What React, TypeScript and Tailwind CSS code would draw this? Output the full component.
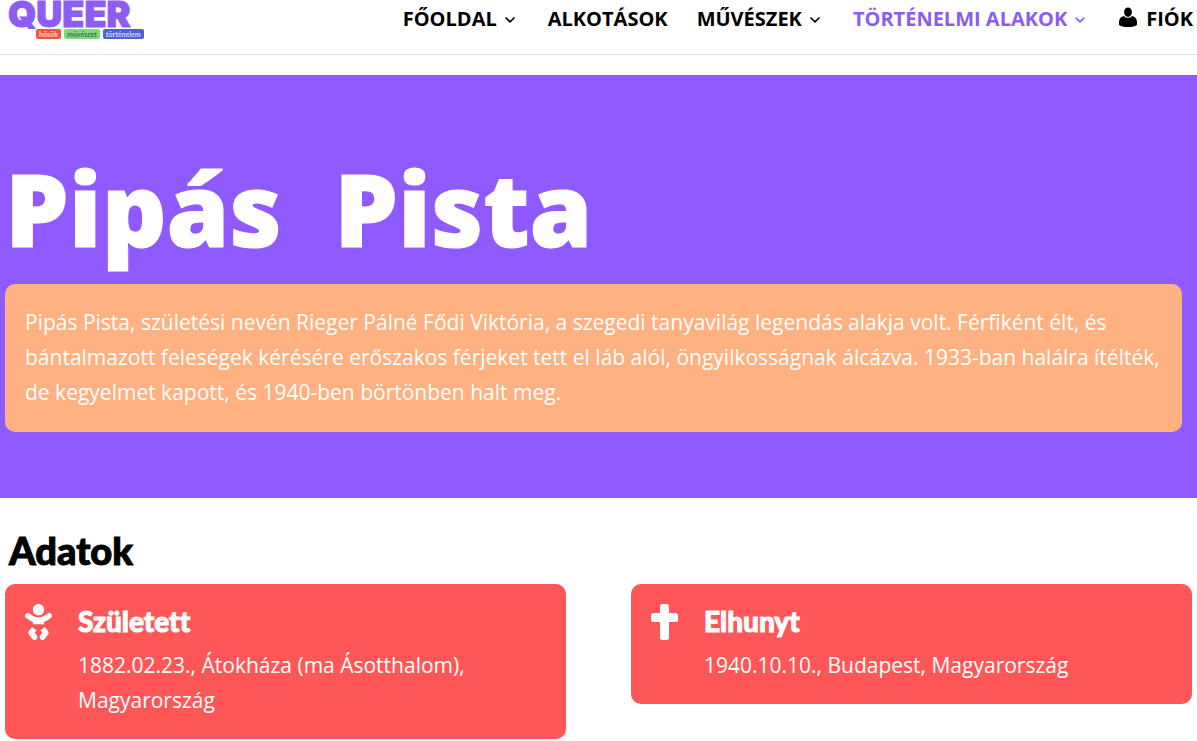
import type { ReactNode } from 'react';
import clsx from 'clsx';
import { FaBaby, FaCross } from 'react-icons/fa';

interface NavItem {
  label: string;
  hasMenu?: boolean;
  active?: boolean;
  icon?: ReactNode;
}

function UserIcon() {
  return (
    <svg viewBox="0 0 20 20" className="mb-1 h-5 w-5" fill="currentColor" aria-hidden="true">
      <path d="M10 9.800c-2.300 0-3.900-2.400-3.900-4.900C6.100 2.300 7.700.5 10 .5s3.900 1.800 3.900 4.400c0 2.500-1.600 4.900-3.900 4.900zM14.200 8.900c2.700.6 4.800 2.900 4.800 5.900v2.700c0 .5-.3.800-.7 1C15.900 19.600 13 20 10 20s-5.900-.4-8.300-1.500c-.4-.2-.7-.5-.7-1v-2.700c0-3 2.100-5.300 4.800-5.900 1.100 1.200 2.500 1.900 4.200 1.900s3.100-.7 4.200-1.900z" />
    </svg>
  );
}

function ChevronIcon() {
  return (
    <svg viewBox="0 0 10 6" className="mr-1 mt-0.5 h-[6px] w-[10px]" fill="none" stroke="currentColor" strokeWidth="1.7" strokeLinecap="round" strokeLinejoin="round" aria-hidden="true">
      <path d="M1 1l4 3.800L9 1" />
    </svg>
  );
}

const navItems: NavItem[] = [
  { label: 'FŐOLDAL', hasMenu: true },
  { label: 'ALKOTÁSOK' },
  { label: 'MŰVÉSZEK', hasMenu: true },
  { label: 'TÖRTÉNELMI ALAKOK', hasMenu: true, active: true },
  { label: 'FIÓK', icon: <UserIcon /> },
];

const facts = [
  { title: 'Született', text: '1882.02.23., Átokháza (ma Ásotthalom), Magyarország', icon: FaBaby },
  { title: 'Elhunyt', text: '1940.10.10., Budapest, Magyarország', icon: FaCross },
];

function Logo() {
  return (
    <a href="#" className="flex flex-col pl-2">
      <span className="font-['Inter',sans-serif] text-[36px] leading-[29px] font-black text-[#8c5cf5] [-webkit-text-stroke:1px]">QUEER</span>
      <span className="ml-7 flex gap-[3px] font-['Lato',sans-serif] text-[7px] leading-[10px] font-black text-white/70">
        <span className="rounded-xs bg-[#f0563f] px-[3px]">hősök</span>
        <span className="rounded-xs bg-[#7fd67c] px-[3px] text-[#3f7d58]">művészet</span>
        <span className="rounded-xs bg-[#4f62d0] px-[3px]">történelem</span>
      </span>
    </a>
  );
}

export default function App() {
  return (
    <div className="bg-white font-['Open_Sans',sans-serif] text-black">
      <header className="flex h-[55px] items-start justify-between border-b border-[#e2e2e2] pr-1">
        <Logo />
        <nav className="flex items-center gap-[29px] pt-1 text-xl leading-[30px] font-bold">
          {navItems.map((item) => (
            <a key={item.label} href="#" className={clsx('flex items-center gap-2 whitespace-nowrap', item.active && 'text-[#8c5cf0]')}>
              {item.icon}
              {item.label}
              {item.hasMenu && <ChevronIcon />}
            </a>
          ))}
        </nav>
      </header>

      <main>
        {/* Hero */}
        <section className="mt-5 bg-[#8f5aff] pt-[66px] pr-[15px] pb-[66px] pl-[5px] text-white">
          <h1 className="pb-2 font-['Noto_Sans',sans-serif] text-[101px] leading-[135px] font-black whitespace-pre-wrap [-webkit-text-stroke:1px]">Pipás  Pista</h1>
          <p className="rounded-[10px] bg-[#ffb182] px-5 pt-[21px] pb-[22px] text-[21px] leading-[35px]">
            Pipás Pista, születési nevén Rieger Pálné Fődi Viktória, a szegedi tanyavilág legendás alakja volt. Férfiként élt, és
            bántalmazott feleségek kérésére erőszakos férjeket tett el láb alól, öngyilkosságnak álcázva. 1933-ban halálra ítélték,
            de kegyelmet kapott, és 1940-ben börtönben halt meg.
          </p>
        </section>

        {/* Life dates */}
        <section className="px-[5px] pt-[30px]">
          <h2 className="pl-1 font-['Lato',sans-serif] text-[38px] leading-[44px] font-black [-webkit-text-stroke:1px]">Adatok</h2>
          <div className="mt-3 grid grid-cols-2 items-start gap-[65px]">
            {facts.map((fact) => (
              <article key={fact.title} className="flex gap-[26px] rounded-[10px] bg-[#ff5757] px-5 pt-[19px] pb-[21px] text-white">
                <fact.icon className="mt-px h-9 w-[27px] shrink-0" />
                <div>
                  <h3 className="font-['Lato',sans-serif] text-[28px] leading-9 font-black [font-variant-ligatures:none] [-webkit-text-stroke:1px]">{fact.title}</h3>
                  <p className="mt-[9px] text-[21px] leading-[35px]">{fact.text}</p>
                </div>
              </article>
            ))}
          </div>
        </section>
      </main>
    </div>
  );
}
